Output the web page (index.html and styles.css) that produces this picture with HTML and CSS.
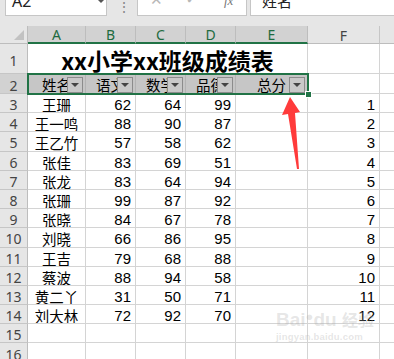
FILE: index.html
```html
<!DOCTYPE html>
<html>
<head>
<meta charset="utf-8">
<link rel="stylesheet" href="styles.css">
</head>
<body>
<div class="fbar">
  <div class="namebox"><span class="nb-text">A2</span><span class="nb-caret"></span></div>
  <div class="dots">⋮</div>
  <div class="fbtns"><span class="bx">✕</span><span class="bok">✓</span><span class="bfx">fx</span></div>
  <div class="finput">姓名</div>
</div>
<div class="gap"></div>
<div class="sheet">
  <div class="corner"><span class="tri"></span></div>
  <div class="ch on">A</div><div class="ch on">B</div><div class="ch on">C</div><div class="ch on">D</div><div class="ch on">E</div><div class="ch">F</div><div class="ch last"></div>

  <div class="rh">1</div>
  <div class="c title">xx小学xx班级成绩表</div>
  <div class="c"></div><div class="c g"></div>

  <div class="rh on">2</div>
  <div class="c hd">姓名<span class="dd"></span></div>
  <div class="c hd">语文<span class="dd"></span></div>
  <div class="c hd">数学<span class="dd"></span></div>
  <div class="c hd">品德<span class="dd"></span></div>
  <div class="c hd">总分<span class="dd"></span></div>
  <div class="c"></div><div class="c g"></div>

  <div class="rh">3</div><div class="c nm">王珊</div><div class="c n">62</div><div class="c n">64</div><div class="c n">99</div><div class="c"></div><div class="c n">1</div><div class="c g"></div>
  <div class="rh">4</div><div class="c nm">王一鸣</div><div class="c n">88</div><div class="c n">90</div><div class="c n">87</div><div class="c"></div><div class="c n">2</div><div class="c g"></div>
  <div class="rh">5</div><div class="c nm">王乙竹</div><div class="c n">57</div><div class="c n">58</div><div class="c n">62</div><div class="c"></div><div class="c n">3</div><div class="c g"></div>
  <div class="rh">6</div><div class="c nm">张佳</div><div class="c n">83</div><div class="c n">69</div><div class="c n">51</div><div class="c"></div><div class="c n">4</div><div class="c g"></div>
  <div class="rh">7</div><div class="c nm">张龙</div><div class="c n">83</div><div class="c n">64</div><div class="c n">94</div><div class="c"></div><div class="c n">5</div><div class="c g"></div>
  <div class="rh">8</div><div class="c nm">张珊</div><div class="c n">99</div><div class="c n">87</div><div class="c n">92</div><div class="c"></div><div class="c n">6</div><div class="c g"></div>
  <div class="rh">9</div><div class="c nm">张晓</div><div class="c n">84</div><div class="c n">67</div><div class="c n">78</div><div class="c"></div><div class="c n">7</div><div class="c g"></div>
  <div class="rh">10</div><div class="c nm">刘晓</div><div class="c n">66</div><div class="c n">86</div><div class="c n">95</div><div class="c"></div><div class="c n">8</div><div class="c g"></div>
  <div class="rh">11</div><div class="c nm">王吉</div><div class="c n">79</div><div class="c n">68</div><div class="c n">88</div><div class="c"></div><div class="c n">9</div><div class="c g"></div>
  <div class="rh">12</div><div class="c nm">蔡波</div><div class="c n">88</div><div class="c n">94</div><div class="c n">58</div><div class="c"></div><div class="c n">10</div><div class="c g"></div>
  <div class="rh">13</div><div class="c nm">黄二丫</div><div class="c n">31</div><div class="c n">50</div><div class="c n">71</div><div class="c"></div><div class="c n">11</div><div class="c g"></div>
  <div class="rh">14</div><div class="c nm">刘大林</div><div class="c n">72</div><div class="c n">92</div><div class="c n">70</div><div class="c"></div><div class="c n">12</div><div class="c g"></div>
  <div class="rh">15</div><div class="c"></div><div class="c"></div><div class="c"></div><div class="c"></div><div class="c"></div><div class="c"></div><div class="c g"></div>
  <div class="rh">16</div><div class="c"></div><div class="c"></div><div class="c"></div><div class="c"></div><div class="c"></div><div class="c"></div><div class="c g"></div>

  <div class="selection"><span class="handle"></span></div>
</div>

<svg class="arrow" width="394" height="359" viewBox="0 0 394 359">
  <polygon points="290,97 300,112 295,113 299,169 297,169 288,114 282,115" fill="#ff3b3b"/>
</svg>

<div class="watermark">
  <div class="wm1">Bai<span class="paw">●</span>du <span class="wmcn">经验</span></div>
  <div class="wm2">jingyan.baidu.com</div>
</div>
</body>
</html>
```

FILE: styles.css
```css
* { box-sizing: border-box; margin: 0; padding: 0; }
html, body { width: 394px; height: 359px; overflow: hidden; background: #fff; }
body { font-family: "Liberation Sans", Arial, sans-serif; color: #000; position: relative; }

/* formula bar (scrolled, top cut off) */
.fbar { height: 16px; display: flex; align-items: flex-end; overflow: hidden; background: #e6e6e6; }
.namebox { margin-left: 5px; width: 102px; height: 26px; background: #fff; border: 1px solid #c6c6c6; position: relative; }
.nb-text { position: absolute; left: 6px; bottom: 6px; font-family: "Noto Sans", sans-serif; font-size: 16px; line-height: 16px; color: #222; }
.nb-caret { position: absolute; left: 91px; bottom: 12px; width: 0; height: 0; border-left: 4px solid transparent; border-right: 4px solid transparent; border-top: 4px solid #555; }
.dots { width: 30px; height: 26px; text-align: center; font-size: 14px; color: #888; line-height: 14px; padding-top: 10px; padding-left: 4px; }
.fbtns { width: 110px; height: 26px; background: #fff; border: 1px solid #c6c6c6; position: relative; color: #b8b8b8; }
.bx { position: absolute; left: 12px; bottom: 8px; font-size: 15px; line-height: 15px; }
.bok { position: absolute; left: 47px; bottom: 8px; font-size: 17px; line-height: 17px; }
.bfx { position: absolute; left: 86px; bottom: 8px; font-family: "Liberation Serif", serif; font-style: italic; font-size: 13px; line-height: 13px; color: #777; }
.finput { margin-left: 3px; flex: 1; height: 26px; background: #fff; border: 1px solid #c6c6c6; border-right: none; font-family: "Noto Sans CJK SC", sans-serif; font-size: 15px; line-height: 16px; color: #222; padding-left: 11px; padding-top: 2px; }
.gap { height: 10px; background: #e6e6e6; }

/* sheet grid */
.sheet { position: relative; display: grid; grid-template-columns: 28px 58px 50px 50px 50px 72px 72px 14px; grid-template-rows: 18px 30px 20px repeat(14, 19.2px); }
.corner { background: #e6e6e6; border-right: 1px solid #bdbdbd; border-bottom: 1px solid #bdbdbd; position: relative; }
.tri { position: absolute; right: 3px; bottom: 3px; width: 0; height: 0; border-left: 10px solid transparent; border-bottom: 10px solid #c2c2c2; }
.ch { background: #e6e6e6; border-right: 1px solid #c6c6c6; border-bottom: 1px solid #bdbdbd; display: flex; align-items: center; justify-content: center; font-family: "Noto Sans", sans-serif; font-size: 14px; color: #444; padding-top: 1px; }
.ch.on { background: #d2d2d2; color: #1e6b40; border-bottom: 2px solid #217346; border-right-color: #bdbdbd; }
.ch.last { border-right: none; }
.rh { background: #e6e6e6; border-right: 1px solid #bdbdbd; border-bottom: 1px solid #c6c6c6; display: flex; align-items: center; justify-content: center; font-family: "Noto Sans", sans-serif; font-size: 14px; color: #444; padding-top: 3px; }
.rh.on { background: #d2d2d2; }
.c { border-right: 1px solid #d4d4d4; border-bottom: 1px solid #d4d4d4; display: flex; align-items: center; font-size: 15px; padding-top: 3px; white-space: nowrap; overflow: hidden; }
.c.g { border-right: none; }
.n { justify-content: flex-end; padding-right: 4px; }
.nm { justify-content: center; font-family: "Noto Sans CJK SC", sans-serif; font-size: 14.5px; }
.title { grid-column: span 5; justify-content: center; font-family: "Noto Sans CJK SC", sans-serif; font-weight: 700; font-size: 23px; padding-top: 2px; }
.hd { background: #c6c6c6; position: relative; justify-content: center; font-family: "Noto Sans CJK SC", sans-serif; font-size: 14.5px; border-right-color: #b4b4b4; border-bottom-color: #b4b4b4; padding-top: 1px; }
.dd { position: absolute; right: 2px; top: 3px; width: 16px; height: 16px; background: #c9c9c9; border: 1px solid #8c8c8c; }
.dd::after { content: ""; position: absolute; left: 3px; top: 5px; border-left: 4px solid transparent; border-right: 4px solid transparent; border-top: 4px solid #444; }

.selection { position: absolute; left: 27px; top: 47px; width: 282px; height: 22px; border: 2px solid #217346; pointer-events: none; }
.handle { position: absolute; right: -5px; bottom: -5px; width: 7px; height: 7px; background: #217346; border: 1px solid #fff; }

.arrow { position: absolute; left: 0; top: 0; pointer-events: none; }

.watermark { position: absolute; left: 276px; top: 306px; color: rgba(170, 170, 170, 0.3); pointer-events: none; }
.wm1 { font-family: "Liberation Sans", sans-serif; font-weight: 700; font-size: 19px; line-height: 22px; white-space: nowrap; }
.paw { font-size: 13px; vertical-align: 5px; }
.wmcn { font-family: "Noto Sans CJK SC", sans-serif; font-size: 16px; }
.wm2 { font-family: "Liberation Sans", sans-serif; font-size: 9.5px; line-height: 11px; font-weight: 700; letter-spacing: 0.2px; }
```
